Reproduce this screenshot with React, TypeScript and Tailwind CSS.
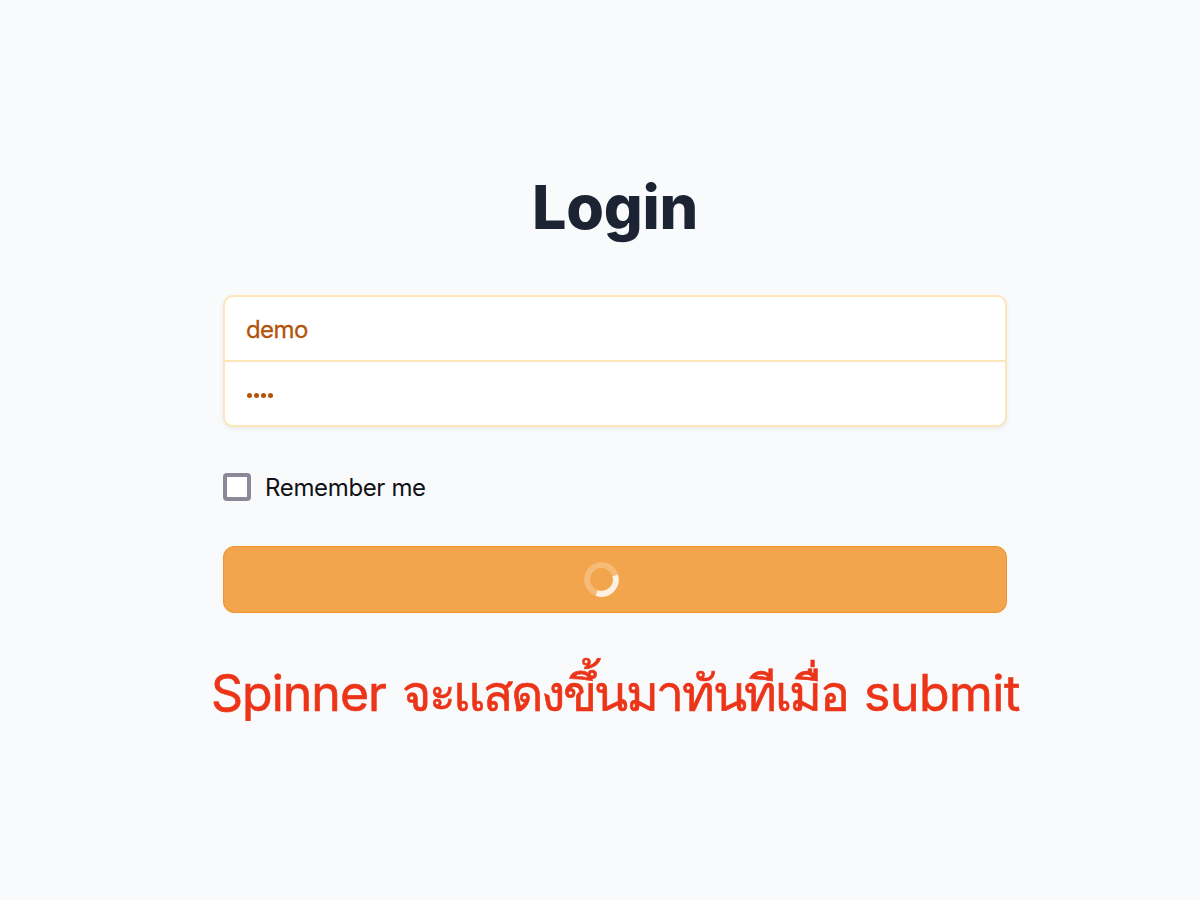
import React, { useState } from "react";

const Spinner = () => (
  <svg className="h-[35px] w-[35px]" viewBox="0 0 36 36" fill="none">
    <circle cx="18" cy="18" r="14.75" stroke="white" strokeOpacity="0.25" strokeWidth="6" />
    <path
      d="M32.1 13.7A14.75 14.75 0 0 1 13 31.88"
      stroke="white"
      strokeOpacity="0.8"
      strokeWidth="6"
    />
  </svg>
);

const App = () => {
  const [username, setUsername] = useState("demo");
  const [remember, setRemember] = useState(false);

  return (
    <main className="h-screen overflow-hidden bg-[#f9fafc] pl-[30px] font-['Inter','Liberation_Sans',sans-serif]">
      <div className="mx-auto flex w-[784px] flex-col items-center pt-[167px]">
        <h1 className="h-[128px] whitespace-nowrap text-[61px] leading-[80px] font-extrabold tracking-[-0.3px] text-[#1c2434]">
          Login
        </h1>

        <form className="w-full" onSubmit={(e) => e.preventDefault()}>
          <div className="h-[132px] w-full overflow-hidden rounded-[10px] border-2 border-[#fde6b8] bg-white text-[#b45309] shadow-[0_2px_4px_rgba(15,23,42,0.07)]">
            <input
              className="block h-[65px] w-full border-b-2 border-[#fde6b8] px-[21px] pt-[2px] text-[24px] tracking-[-0.6px] outline-none [-webkit-text-stroke:0.3px_#b45309]"
              value={username}
              onChange={(e) => setUsername(e.target.value)}
            />
            <div className="flex h-[64px] items-center gap-[2px] px-[22px] pt-[3px]">
              {[0, 1, 2, 3].map((i) => (
                <span key={i} className="h-[5px] w-[5px] rounded-full bg-[#b45309]" />
              ))}
            </div>
          </div>

          <label className="mt-[46px] flex h-7 items-center text-[24px] text-[#111318]">
            <input
              type="checkbox"
              className="mr-[14px] h-7 w-7 appearance-none rounded-[4px] border-4 border-[#8b8998] bg-white"
              checked={remember}
              onChange={() => setRemember(!remember)}
            />
            <span className="whitespace-nowrap pt-[2px] tracking-[-0.35px]">Remember me</span>
          </label>

          <button
            type="submit"
            className="mt-[45px] flex h-[67px] w-full items-center justify-center rounded-[11px] border border-[#f0952b] bg-[#f3a54d] pr-[27px]"
          >
            <Spinner />
          </button>
        </form>

        <p className="mt-[40px] flex h-[80px] w-[808px] items-center whitespace-nowrap text-[50px] text-[#ec3418] [-webkit-text-stroke:0.6px_#ec3418]">
          <span className="w-[191px] shrink-0 tracking-[-1px]">Spinner</span>
          <span className="w-[462px] shrink-0 tracking-[-2.4px]">จะแสดงขึ้นมาทันทีเมื่อ</span>
          <span className="tracking-[-0.5px]">submit</span>
        </p>
      </div>
    </main>
  );
};

export default App;
